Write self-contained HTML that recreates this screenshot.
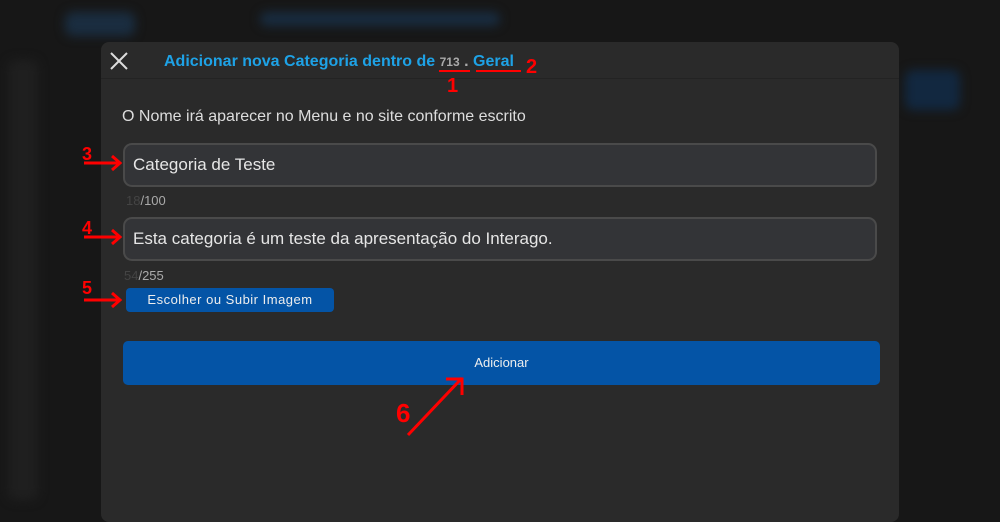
<!DOCTYPE html>
<html><head><style>
body{margin:0;width:1000px;height:510px;background:#171717;position:relative;overflow:hidden;font-family:"Liberation Sans",sans-serif}
.blur{position:absolute;filter:blur(5px);border-radius:8px}
.modal{position:absolute;left:101px;top:42px;width:798px;height:480px;background:#2a2a2a;border-radius:8px}
.hdr{height:36px;border-bottom:1px solid #232323;position:relative}
.t{position:absolute;left:63px;top:11px;color:#1ea2e6;font-weight:bold;font-size:16px}
.inp{position:absolute;left:22px;width:742px;height:40px;border:2px solid #4a4a4a;border-radius:9px;background:#333437;color:#e6e6e6;font-size:17px;line-height:40px;padding-left:8px;box-sizing:content-box}
.small{position:absolute;color:#aaa;font-size:13px}
.red{position:absolute;color:#f00;font-weight:bold;font-size:18px}
</style></head><body>
<div class="blur" style="left:65px;top:12px;width:70px;height:24px;background:#1a2d40"></div>
<div class="blur" style="left:260px;top:12px;width:240px;height:14px;background:#182c40"></div>
<div class="blur" style="left:8px;top:60px;width:30px;height:440px;background:#1f1f1f"></div>
<div class="blur" style="left:905px;top:70px;width:55px;height:40px;background:#122840"></div>
<div class="modal">
<div class="hdr">
<svg style="position:absolute;left:9px;top:10px" width="18" height="18"><path d="M1 1L17 17M17 1L1 17" stroke="#ddd" stroke-width="2"/></svg>
<div class="t">Adicionar nova Categoria dentro de <span style="color:#aaa;font-size:12px">713</span> <span style="color:#aaa">.</span> Geral</div>
<div style="position:absolute;left:338px;top:28px;width:31px;height:2px;background:#f00"></div>
<div style="position:absolute;left:375px;top:28px;width:45px;height:2px;background:#f00"></div>
<div class="red" style="left:425px;top:14px;font-size:20px">2</div>
<div class="red" style="left:346px;top:33px;font-size:20px">1</div>
</div>
<div style="position:absolute;left:21px;top:66px;color:#ddd;font-size:16px">O Nome irá aparecer no Menu e no site conforme escrito</div>
<div class="inp" style="top:101px">Categoria de Teste</div>
<div class="small" style="left:25px;top:151px"><span style="color:#444">18</span>/100</div>
<div class="inp" style="top:175px">Esta categoria é um teste da apresentação do Interago.</div>
<div class="small" style="left:23px;top:226px"><span style="color:#444">54</span>/255</div>
<div style="position:absolute;left:25px;top:246px;width:208px;height:24px;background:#0454a6;border-radius:4px;color:#eee;font-size:13px;text-align:center;line-height:24px;letter-spacing:0.5px">Escolher ou Subir Imagem</div>
<div style="position:absolute;left:22px;top:299px;width:757px;height:44px;background:#0454a6;border-radius:5px;color:#eee;font-size:13px;text-align:center;line-height:44px">Adicionar</div>
<div class="red" style="left:-19px;top:102px">3</div>
<div class="red" style="left:-19px;top:176px">4</div>
<div class="red" style="left:-19px;top:236px">5</div>
<div class="red" style="left:295px;top:356px;font-size:26px">6</div>
<svg style="position:absolute;left:-101px;top:-42px" width="1000" height="510"><g stroke="#f00" stroke-width="3" fill="none">
<path d="M84 163H120M112 156L120 163L112 170"/>
<path d="M84 237H120M112 230L120 237L112 244"/>
<path d="M84 300H120M112 293L120 300L112 307"/>
<path d="M408 435L462 378M446 379H462V395"/></g></svg>
</div>
</body></html>
